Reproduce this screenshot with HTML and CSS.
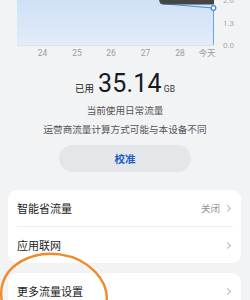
FILE: index.html
```html
<!DOCTYPE html>
<html lang="zh">
<head>
<meta charset="utf-8">
<link rel="stylesheet" href="styles.css">
</head>
<body>
<div class="page">
  <svg class="chart" width="250" height="60" viewBox="0 0 250 60">
    <defs>
      <linearGradient id="g" x1="0" y1="0" x2="0" y2="1">
        <stop offset="0" stop-color="#cfe0f6"/>
        <stop offset="1" stop-color="#e3ecf7"/>
      </linearGradient>
    </defs>
    <rect x="17" y="0" width="196" height="45" fill="url(#g)"/>
    <line x1="17" y1="45.5" x2="213" y2="45.5" stroke="#dfe3e8" stroke-width="1"/>
    <polyline points="160,3.5 213,8" fill="none" stroke="#4a8fe0" stroke-width="1.2"/>
    <line x1="213.5" y1="8" x2="213.5" y2="45" stroke="#6aa3e6" stroke-width="1"/>
    <path d="M159,0 H214 V4.5 H165 A5,5 0 0 1 159,0 Z" fill="#454545"/>
    <circle cx="213.5" cy="8" r="2.3" fill="#fff" stroke="#3c86de" stroke-width="1.2"/>
    <g class="ylab">
      <text x="223" y="2.5">2.6</text>
      <text x="223" y="26">1.3</text>
      <text x="223" y="48">0.0</text>
    </g>
    <g class="xlab" text-anchor="middle">
      <text x="42.5" y="56">24</text>
      <text x="77" y="56">25</text>
      <text x="111" y="56">26</text>
      <text x="145.5" y="56">27</text>
      <text x="180" y="56">28</text>
      <text x="207" y="56">今天</text>
    </g>
  </svg>

  <div class="summary">
    <div class="used"><span class="used-label">已用</span><span class="used-num">35.14</span><span class="used-unit">GB</span></div>
    <div class="sub first">当前使用日常流量</div>
    <div class="sub">运营商流量计算方式可能与本设备不同</div>
  </div>

  <div class="btn-wrap"><div class="btn">校准</div></div>

  <div class="card">
    <div class="row"><span class="row-title">智能省流量</span><span class="row-right"><span class="row-val">关闭</span><span class="chev"></span></span></div>
    <div class="divider"></div>
    <div class="row"><span class="row-title">应用联网</span><span class="row-right"><span class="chev"></span></span></div>
  </div>

  <div class="card card2">
    <div class="row"><span class="row-title">更多流量设置</span><span class="row-right"><span class="chev"></span></span></div>
  </div>

  <svg class="circle" width="250" height="300" viewBox="0 0 250 300">
    <ellipse cx="54" cy="296" rx="53" ry="42" transform="rotate(8 54 296)" fill="none" stroke="#f08a2c" stroke-width="2.4"/>
  </svg>
</div>
</body>
</html>
```

FILE: styles.css
```css
* { box-sizing: border-box; }
html, body { margin: 0; padding: 0; }
body {
  background: #f1f3f5;
  font-family: "Noto Sans CJK SC", "Noto Sans", sans-serif;
  width: 250px;
  height: 300px;
  overflow: hidden;
}
.page { position: relative; width: 250px; height: 300px; }
.chart { display: block; }
.ylab text { font-family: Roboto, "Noto Sans", sans-serif; font-size: 8px; fill: #a8abb0; }
.xlab text { font-family: Roboto, "Noto Sans CJK SC", sans-serif; font-size: 8.5px; fill: #9a9da2; }

.summary { display: flex; flex-direction: column; align-items: center; margin-top: 9px; }
.used { display: flex; align-items: baseline; height: 30px; color: #1a1a1a; }
.used-label { font-size: 9.5px; margin-right: 4px; color: #222; }
.used-num { font-family: Roboto, sans-serif; font-size: 25px; line-height: 30px; letter-spacing: 0.2px; }
.used-unit { font-family: Roboto, sans-serif; font-size: 8.5px; margin-left: 2px; color: #333; }
.sub { font-size: 9.6px; color: #555; line-height: 19px; }
.sub.first { margin-top: 2px; }

.btn-wrap { display: flex; justify-content: center; margin-top: 6px; }
.btn {
  width: 132px; height: 27px; border-radius: 14px; background: #e5e6e9;
  color: #1f5fc6; font-size: 10.5px; font-weight: 600;
  display: flex; align-items: center; justify-content: center;
}

.card { margin: 18px 9px 0 8px; background: #fff; border-radius: 9px; padding: 0 8px 0 9px; }
.card2 { margin-top: 10px; }
.row { height: 36px; display: flex; align-items: center; justify-content: space-between; }
.row-title { font-size: 11px; color: #1c1c1c; }
.row-right { display: flex; align-items: center; }
.row-val { font-size: 9.5px; color: #8f9297; margin-right: 5px; }
.chev {
  width: 5px; height: 5px; border-top: 1px solid #b5b8bc; border-right: 1px solid #b5b8bc;
  transform: rotate(45deg); margin-right: 3px;
}
.divider { height: 1px; background: #eceef0; }

.circle { position: absolute; left: 0; top: 0; pointer-events: none; }
```
